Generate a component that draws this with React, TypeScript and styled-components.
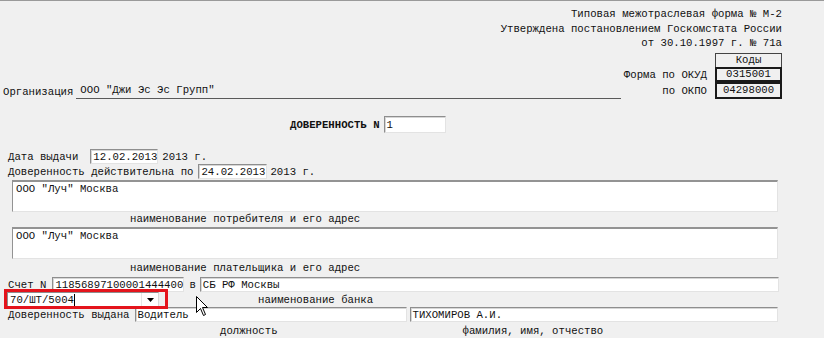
import styled, { createGlobalStyle } from "styled-components";

const GlobalStyle = createGlobalStyle`
  body {
    margin: 0;
    background: #f0f0f0;
    font-family: "Liberation Mono", "Courier New", monospace;
    font-size: 8pt;
    color: #111;
  }
`;

const Page = styled.div`
  position: relative;
  width: 824px;
  height: 338px;
  box-sizing: border-box;
  border-top: 1px solid #9a9a9a;
  background: #f0f0f0;
  overflow: hidden;
`;

const FormHeader = styled.div`
  padding: 6px 42px 0 0;
  text-align: right;
  line-height: 14.5px;
  white-space: pre;
`;

const TopRow = styled.div`
  display: flex;
  align-items: flex-end;
  margin-top: 2.5px;
  padding-right: 42px;
`;

const OrgBlock = styled.div`
  display: flex;
  align-items: flex-end;
  padding-left: 3px;
  line-height: 14px;
`;

const OrgValue = styled.div`
  width: 545px;
  box-sizing: border-box;
  margin-left: 3px;
  padding: 0 0 1px 4px;
  border-bottom: 1px solid #5a5a5a;
  white-space: pre;
`;

const Codes = styled.div`
  margin-left: auto;
  display: grid;
  grid-template-columns: auto 67px;
  column-gap: 8px;
  align-items: center;
`;

const CodeLabel = styled.div`
  text-align: right;
  white-space: pre;
`;

const CodeHead = styled.div`
  height: 14px;
  box-sizing: border-box;
  border: 1px solid #444;
  border-bottom: none;
  text-align: center;
  line-height: 13px;
`;

const CodeCell = styled.div<{ $h: number }>`
  height: ${(p) => p.$h}px;
  box-sizing: border-box;
  border: 2px solid #1a1a1a;
  text-align: center;
  line-height: ${(p) => p.$h - 4}px;
`;

const Row = styled.div<{ $pl?: number; $mt?: number; $h?: number }>`
  display: flex;
  align-items: center;
  padding-left: ${(p) => p.$pl ?? 8}px;
  margin-top: ${(p) => p.$mt ?? 0}px;
  height: ${(p) => p.$h ?? 15}px;
  white-space: pre;
`;

const Title = styled.span`
  font-weight: bold;
`;

// sunken white box, like the old WinForms text field
const Field = styled.div<{ $w: number; $ml?: number; $h?: number }>`
  display: flex;
  align-items: center;
  width: ${(p) => p.$w}px;
  height: ${(p) => p.$h ?? 15}px;
  margin-left: ${(p) => p.$ml ?? 0}px;
  box-sizing: border-box;
  padding-left: 2px;
  background: #fff;
  border-style: solid;
  border-width: 1px;
  border-color: #8e8e8e #e3e3e3 #e3e3e3 #8e8e8e;
  box-shadow: inset 1px 1px 0 #d6d6d6;
  white-space: pre;
`;

const Suffix = styled.span<{ $ml: number }>`
  margin-left: ${(p) => p.$ml}px;
`;

const Area = styled.div<{ $mt: number }>`
  width: 766px;
  height: 32px;
  margin: ${(p) => p.$mt}px 0 0 12px;
  box-sizing: border-box;
  padding: 1px 3px;
  background: #fff;
  border-style: solid;
  border-width: 2px 1px 1px 1px;
  border-color: #939393 #e3e3e3 #e3e3e3 #939393;
  line-height: 13px;
  white-space: pre;
`;

const Caption = styled.div<{ $pl: number; $mt: number }>`
  padding-left: ${(p) => p.$pl}px;
  margin-top: ${(p) => p.$mt}px;
  line-height: 14px;
  white-space: pre;
`;

const ComboWrap = styled.div`
  position: relative;
  margin-left: -1px;
`;

const Highlight = styled.div`
  position: absolute;
  top: -3px;
  left: -3px;
  right: -9px;
  bottom: -2px;
  border: 3px solid #e4141c;
  pointer-events: none;
`;

const Combo = styled.div`
  display: flex;
  align-items: center;
  width: 152px;
  height: 15px;
  box-sizing: border-box;
  background: #fff;
  border-style: solid;
  border-width: 1px;
  border-color: #8e8e8e #d8d8d8 #d8d8d8 #8e8e8e;
  padding-left: 2px;
`;

const ComboText = styled.span`
  flex: 1;
  display: flex;
  align-items: center;
`;

const Caret = styled.span`
  width: 1px;
  height: 12px;
  background: #000;
`;

const ComboButton = styled.span`
  width: 16px;
  height: 13px;
  display: flex;
  align-items: center;
  justify-content: center;
  border-left: 1px solid #e6e6e6;
`;

const Pointer = styled.svg`
  position: absolute;
  left: 196px;
  top: 295px;
`;

export default function App() {
  return (
    <>
      <GlobalStyle />
      <Page>
        <FormHeader>
          <div>Типовая межотраслевая форма № М-2</div>
          <div>Утверждена постановлением Госкомстата России</div>
          <div>от 30.10.1997 г. № 71а</div>
        </FormHeader>

        <TopRow>
          <OrgBlock>
            <span>Организация</span>
            <OrgValue>ООО "Джи Эс Эс Групп"</OrgValue>
          </OrgBlock>
          <Codes>
            <span />
            <CodeHead>Коды</CodeHead>
            <CodeLabel>Форма по ОКУД</CodeLabel>
            <CodeCell $h={15}>0315001</CodeCell>
            <CodeLabel>по ОКПО</CodeLabel>
            <CodeCell $h={17}>04298000</CodeCell>
          </Codes>
        </TopRow>

        <Row $pl={290} $mt={17} $h={17}>
          <Title>ДОВЕРЕННОСТЬ N</Title>
          <Field $w={62} $ml={4} $h={17}>1</Field>
        </Row>

        <Row $mt={16}>
          <span>Дата выдачи</span>
          <Field $w={68} $ml={12}>12.02.2013</Field>
          <Suffix $ml={4}>2013 г.</Suffix>
        </Row>
        <Row>
          <span>Доверенность действительна по</span>
          <Field $w={69} $ml={5}>24.02.2013</Field>
          <Suffix $ml={3}>2013 г.</Suffix>
        </Row>

        <Area $mt={1}>ООО "Луч" Москва</Area>
        <Caption $pl={130} $mt={0}>наименование потребителя и его адрес</Caption>
        <Area $mt={1}>ООО "Луч" Москва</Area>
        <Caption $pl={130} $mt={2}>наименование плательщика и его адрес</Caption>

        <Row $mt={2}>
          <span>Счет N</span>
          <Field $w={132} $ml={6}>11856897100001444400</Field>
          <Suffix $ml={5}>в</Suffix>
          <Field $w={579} $ml={4}>СБ РФ Москвы</Field>
        </Row>

        <Row>
          <ComboWrap>
            <Combo>
              <ComboText>
                70/ШТ/5004
                <Caret />
              </ComboText>
              <ComboButton>
                <svg width="7" height="4" viewBox="0 0 7 4">
                  <path d="M0 0h7L3.5 4z" fill="#000" />
                </svg>
              </ComboButton>
            </Combo>
            <Highlight />
          </ComboWrap>
          <Suffix $ml={99}>наименование банка</Suffix>
        </Row>

        <Row>
          <span>Доверенность выдана</span>
          <Field $w={272} $ml={5}>Водитель</Field>
          <Field $w={368} $ml={3}>ТИХОМИРОВ А.И.</Field>
        </Row>

        <Row $pl={220} $mt={2} $h={14}>
          <span>должность</span>
          <Suffix $ml={185}>фамилия, имя, отчество</Suffix>
        </Row>

        <Pointer width="13" height="21" viewBox="0 0 13 21">
          <path
            d="M0.5 0.5 L0.5 16.5 L4.5 12.5 L7.5 19.5 L9.5 18.5 L6.5 11.5 L11.5 11.5 Z"
            fill="#fff"
            stroke="#000"
            strokeWidth="1"
          />
        </Pointer>
      </Page>
    </>
  );
}
